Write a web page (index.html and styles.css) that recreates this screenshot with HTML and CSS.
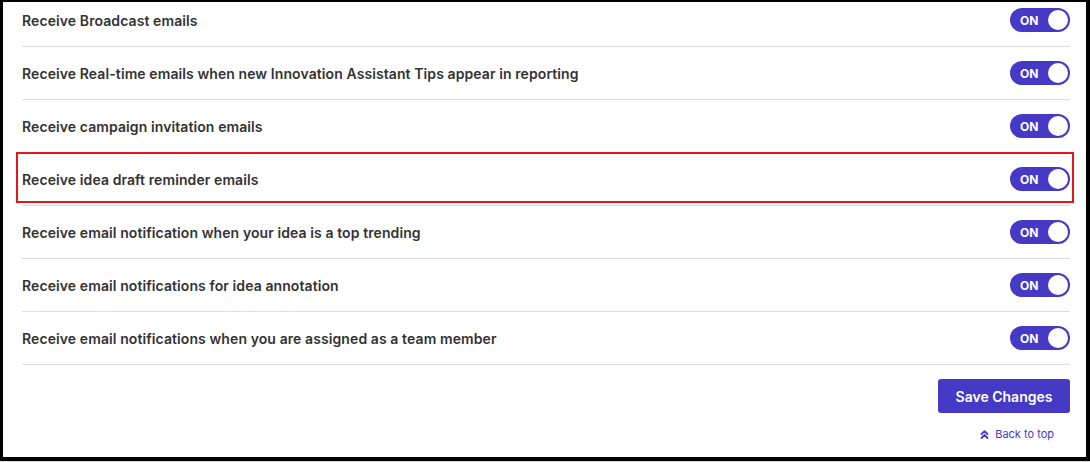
FILE: index.html
```html
<!DOCTYPE html>
<html lang="en">
<head>
    <meta charset="UTF-8">
    <meta name="viewport" content="width=device-width, initial-scale=1.0">
    <title>Email Preferences</title>
    <link rel="stylesheet" href="styles.css">
</head>
<body>
    <div class="frame">
        <div class="settings">
            <div class="row">
                <span class="label">Receive Broadcast emails</span>
                <span class="toggle"><span class="toggle-text">ON</span><span class="knob"></span></span>
            </div>
            <div class="row">
                <span class="label">Receive Real-time emails when new Innovation Assistant Tips appear in reporting</span>
                <span class="toggle"><span class="toggle-text">ON</span><span class="knob"></span></span>
            </div>
            <div class="row">
                <span class="label">Receive campaign invitation emails</span>
                <span class="toggle"><span class="toggle-text">ON</span><span class="knob"></span></span>
            </div>
            <div class="row highlighted">
                <span class="label">Receive idea draft reminder emails</span>
                <span class="toggle"><span class="toggle-text">ON</span><span class="knob"></span></span>
            </div>
            <div class="row">
                <span class="label">Receive email notification when your idea is a top trending</span>
                <span class="toggle"><span class="toggle-text">ON</span><span class="knob"></span></span>
            </div>
            <div class="row">
                <span class="label">Receive email notifications for idea annotation</span>
                <span class="toggle"><span class="toggle-text">ON</span><span class="knob"></span></span>
            </div>
            <div class="row">
                <span class="label">Receive email notifications when you are assigned as a team member</span>
                <span class="toggle"><span class="toggle-text">ON</span><span class="knob"></span></span>
            </div>
        </div>

        <div class="actions">
            <button class="save-btn">Save Changes</button>
            <a class="back-top" href="#">
                <svg width="9" height="9" viewBox="0 0 9 9" fill="none" stroke="currentColor" stroke-width="1.8" stroke-linecap="round" stroke-linejoin="round">
                    <polyline points="1.5,4.2 4.5,1.2 7.5,4.2"/>
                    <polyline points="1.5,8 4.5,5 7.5,8"/>
                </svg>
                Back to top
            </a>
        </div>
    </div>
</body>
</html>
```

FILE: styles.css
```css
body {
    margin: 0;
    background: #d9d9d9;
    font-family: Inter, "Noto Sans", sans-serif;
}

.frame {
    box-sizing: border-box;
    width: 1090px;
    height: 461px;
    background: white;
    border-style: solid;
    border-color: #000;
    border-width: 2px 4px 4px 3px;
    padding: 0 16px 0 19px;
    overflow: hidden;
}

.settings {
    margin-top: -8px;
}

.row {
    position: relative;
    display: flex;
    align-items: center;
    justify-content: space-between;
    height: 52px;
    border-bottom: 1px solid #dedede;
}

.row.highlighted::after {
    content: "";
    position: absolute;
    left: -6px;
    right: -4px;
    top: -1px;
    bottom: 2px;
    border: 2px solid #e8141b;
    pointer-events: none;
}

.label {
    font-size: 14px;
    font-weight: 600;
    letter-spacing: 0.09px;
    color: #333;
}

.toggle {
    box-sizing: border-box;
    display: flex;
    align-items: center;
    justify-content: space-between;
    width: 60px;
    height: 24px;
    padding: 0 2px 0 10px;
    border-radius: 12px;
    background: #4539c6;
}

.toggle-text {
    color: white;
    font-size: 12px;
    font-weight: 700;
}

.knob {
    width: 20px;
    height: 20px;
    border-radius: 50%;
    background: white;
}

.actions {
    display: flex;
    flex-direction: column;
    align-items: flex-end;
    padding-top: 14px;
}

.save-btn {
    width: 132px;
    height: 34px;
    border: none;
    border-radius: 3px;
    background: #4539c6;
    color: white;
    font-family: Inter, "Noto Sans", sans-serif;
    font-size: 14px;
    font-weight: 600;
}

.back-top {
    display: flex;
    align-items: center;
    gap: 6px;
    margin: 14px 16px 0 0;
    color: #4539c6;
    font-size: 11px;
    text-decoration: none;
}
```
